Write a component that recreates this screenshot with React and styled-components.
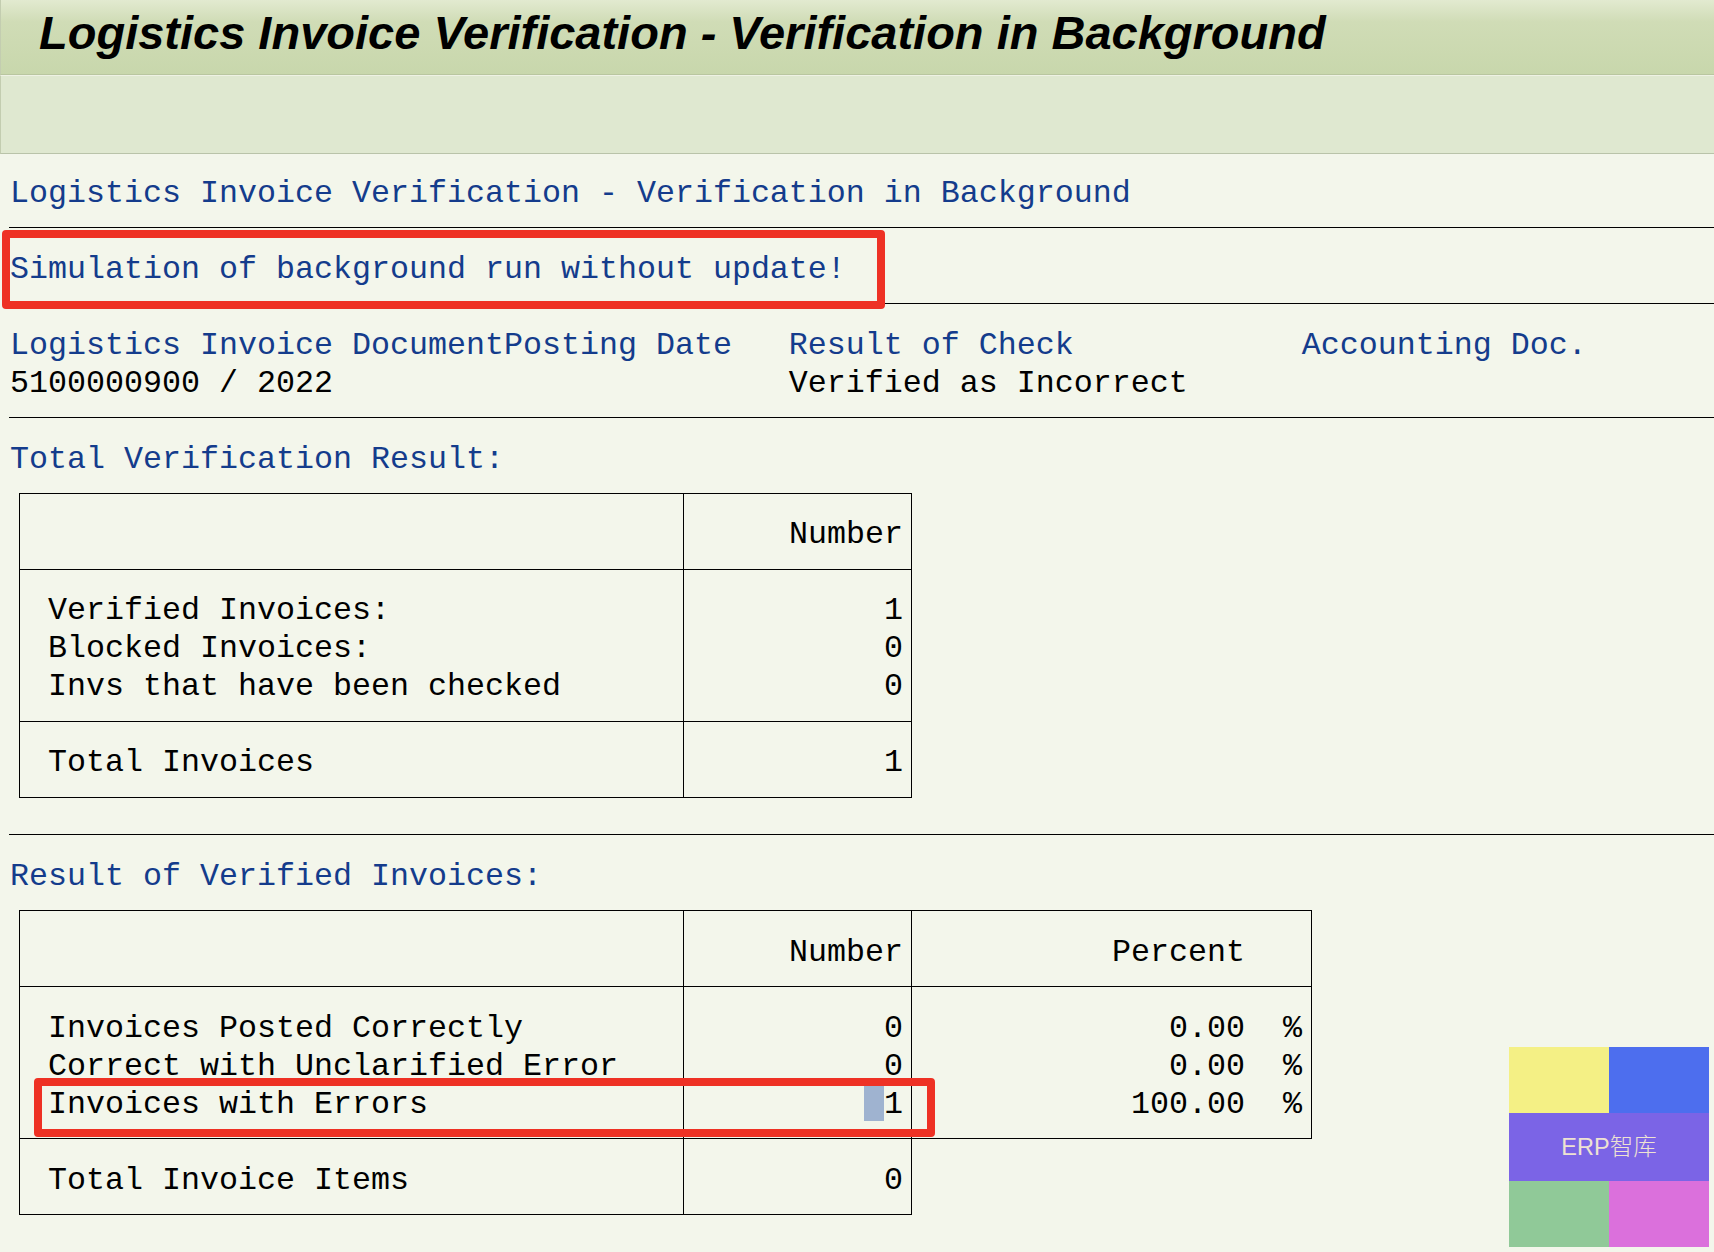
import styled, { createGlobalStyle } from "styled-components";

const GlobalStyle = createGlobalStyle`
  html, body {
    margin: 0;
    padding: 0;
    background: #f3f6eb;
  }
  body {
    height: 1252px;
    overflow: hidden;
  }
`;

const Page = styled.div`
  position: relative;
  height: 1252px;
  font-family: "Liberation Mono", monospace;
  font-size: 31.67px;
  color: #000;
`;

const TitleBar = styled.header`
  box-sizing: border-box;
  height: 75px;
  padding: 0 0 0 38px;
  background: linear-gradient(#e2ead0 0, #d0dcb6 22px, #c8d7ac 100%);
  border-bottom: 1px solid #b9c6a0;
  border-left: 1px solid #c3cdb0;
  font-family: "Liberation Sans", Arial, sans-serif;
  font-size: 47px;
  font-weight: bold;
  font-style: italic;
  line-height: 66px;
  white-space: nowrap;
`;

const Toolbar = styled.div`
  box-sizing: border-box;
  height: 79px;
  background: #dfe8d0;
  border-top: 1px solid #eef2e4;
  border-bottom: 1px solid #b9c3a9;
  border-left: 1px solid #c3cdb0;
`;

const Content = styled.main`
  padding: 19px 0 0 9px;
`;

const Line = styled.div`
  position: relative;
  height: 38px;
  line-height: ${(p) => (p.$low ? "44px" : "42px")};
  padding-left: 1px;
  white-space: pre;
  color: ${(p) => (p.$blue ? "#143c8c" : "#000")};
`;

const Rule = styled.hr`
  height: 1px;
  margin: 16px 0 21px;
  border: 0;
  background: #000;
`;

const Table = styled.div`
  position: relative;
  width: ${(p) => (p.$wide ? "1293px" : "893px")};
  margin: 16px 0 36px 10px;
`;

const Section = styled.div`
  box-sizing: border-box;
  display: grid;
  width: ${(p) => (p.$wide ? "1293px" : "893px")};
  grid-template-columns: ${(p) => (p.$wide ? "663px 228px 1fr" : "663px 1fr")};
  border: 1px solid #000;
  border-top: ${(p) => (p.$first ? "1px solid #000" : "0")};
`;

const Cell = styled.div`
  padding: 20px 0 17px;
  border-left: ${(p) => (p.$first ? "0" : "1px solid #000")};
  & > div {
    padding: 0 ${(p) => p.$right || "0"} 0 ${(p) => (p.$first ? "28px" : "0")};
    text-align: ${(p) => (p.$first ? "left" : "right")};
  }
`;

const Cursor = styled.span`
  display: inline-block;
  width: 20px;
  height: 35px;
  vertical-align: -8px;
  background: #9fb3d0;
`;

const Callout = styled.div`
  position: absolute;
  box-sizing: border-box;
  border: 8px solid #ee3124;
  border-radius: 4px;
  pointer-events: none;
`;

const TopCallout = styled(Callout)`
  left: -7px;
  top: -19px;
  width: 883px;
  height: 79px;
`;

const RowCallout = styled(Callout)`
  left: 15px;
  top: 168px;
  width: 901px;
  height: 59px;
`;

const Watermark = styled.div`
  position: absolute;
  left: 1509px;
  top: 1047px;
  width: 200px;
  height: 200px;
  display: grid;
  grid-template-columns: 1fr 1fr;
  grid-template-rows: 66px 68px 66px;
`;

const Patch = styled.div`
  background: ${(p) => p.$color};
`;

const WatermarkLabel = styled.div`
  grid-column: 1 / 3;
  display: flex;
  align-items: center;
  justify-content: center;
  padding-bottom: 4px;
  box-sizing: border-box;
  background: #7b64e6;
  color: #eee2d2;
  font-family: "Liberation Sans", "Noto Sans CJK SC", sans-serif;
  font-size: 23.5px;
  font-weight: 300;
`;

function ResultTable({ wide, sections, children }) {
  return (
    <Table $wide={wide}>
      {sections.map((section, i) => (
        <Section key={i} $wide={!!section.percents} $first={i === 0}>
          <Cell $first>
            {section.labels.map((label, j) => (
              <Line key={j} $low={wide}>{label}</Line>
            ))}
          </Cell>
          <Cell $right="8px">
            {section.numbers.map((n, j) => (
              <Line key={j} $low={wide}>
                {n === "cursor" ? (
                  <>
                    <Cursor />1
                  </>
                ) : (
                  n
                )}
              </Line>
            ))}
          </Cell>
          {section.percents && (
            <Cell $right="9px">
              {section.percents.map((p, j) => (
                <Line key={j} $low>{p}</Line>
              ))}
            </Cell>
          )}
        </Section>
      ))}
      {children}
    </Table>
  );
}

const totals = [
  { labels: [" "], numbers: ["Number"] },
  {
    labels: ["Verified Invoices:", "Blocked Invoices:", "Invs that have been checked"],
    numbers: ["1", "0", "0"],
  },
  { labels: ["Total Invoices"], numbers: ["1"] },
];

const results = [
  { labels: [" "], numbers: ["Number"], percents: ["Percent   "] },
  {
    labels: ["Invoices Posted Correctly", "Correct with Unclarified Error", "Invoices with Errors"],
    numbers: ["0", "0", "cursor"],
    percents: ["0.00  %", "0.00  %", "100.00  %"],
  },
  { labels: ["Total Invoice Items"], numbers: ["0"] },
];

export default function App() {
  return (
    <Page>
      <GlobalStyle />
      <TitleBar>Logistics Invoice Verification - Verification in Background</TitleBar>
      <Toolbar />
      <Content>
        <Line $blue>Logistics Invoice Verification - Verification in Background</Line>
        <Rule />
        <Line $blue>
          Simulation of background run without update!
          <TopCallout />
        </Line>
        <Rule />
        <Line $blue>
          {"Logistics Invoice DocumentPosting Date   Result of Check            Accounting Doc."}
        </Line>
        <Line>
          {"5100000900 / 2022                        Verified as Incorrect"}
        </Line>
        <Rule />
        <Line $blue>Total Verification Result:</Line>
        <ResultTable sections={totals} />
        <Rule />
        <Line $blue>Result of Verified Invoices:</Line>
        <ResultTable wide sections={results}>
          <RowCallout />
        </ResultTable>
      </Content>
      <Watermark>
        <Patch $color="#f4f085" />
        <Patch $color="#4d6eee" />
        <WatermarkLabel>ERP智库</WatermarkLabel>
        <Patch $color="#90c998" />
        <Patch $color="#db70dc" />
      </Watermark>
    </Page>
  );
}
